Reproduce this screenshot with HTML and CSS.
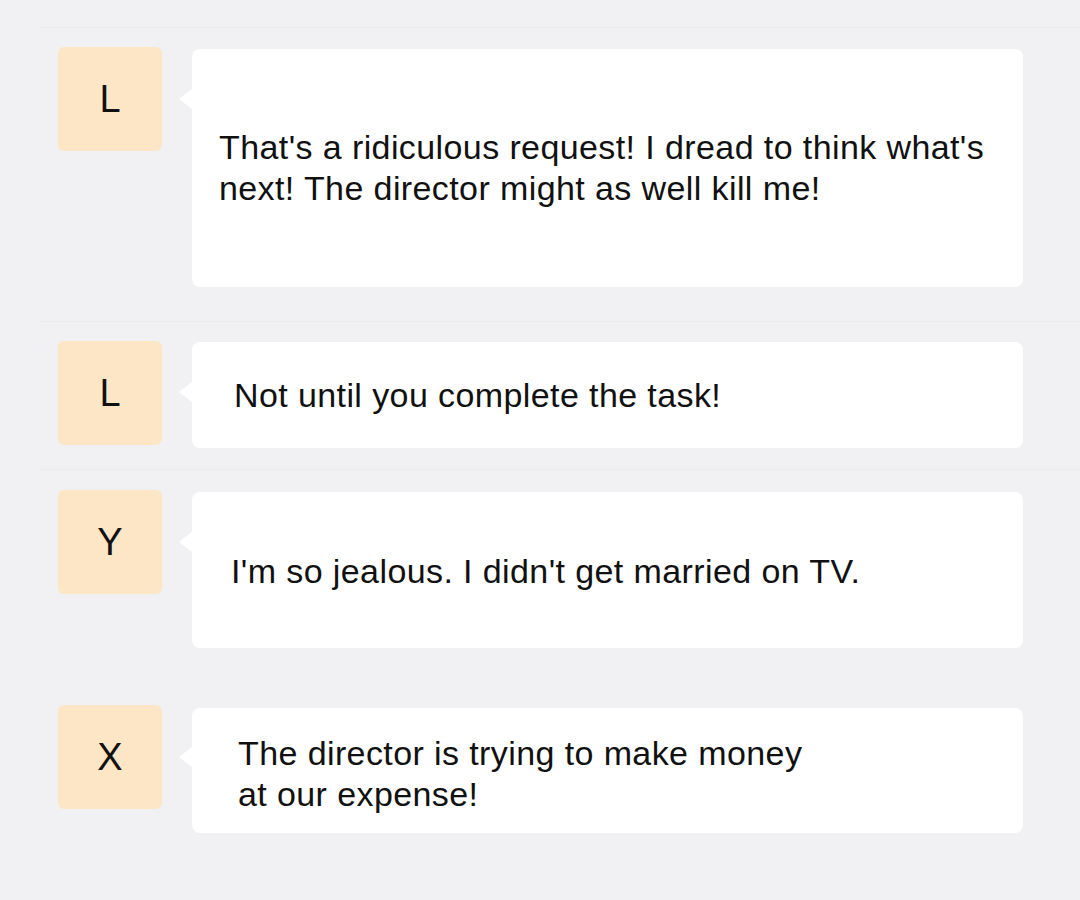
FILE: index.html
```html
<!DOCTYPE html>
<html lang="en">
<head>
  <meta charset="UTF-8" />
  <title>Chat</title>
  <link rel="stylesheet" href="styles.css">
</head>
<body>

  <main class="chat">
    <hr class="divider divider-top">

    <!-- Message rows: avatar on the left, speech bubble on the right -->
    <div class="row row-1">
      <div class="avatar">L</div>
      <div class="bubble bubble-tall">
        <p>That's a ridiculous request! I dread to think what's<br>next! The director might as well kill me!</p>
      </div>
    </div>

    <hr class="divider divider-1">

    <div class="row row-2">
      <div class="avatar">L</div>
      <div class="bubble bubble-short">
        <p>Not until you complete the task!</p>
      </div>
    </div>

    <hr class="divider divider-2">

    <div class="row row-3">
      <div class="avatar">Y</div>
      <div class="bubble bubble-mid">
        <p>I'm so jealous. I didn't get married on TV.</p>
      </div>
    </div>

    <div class="row row-4">
      <div class="avatar">X</div>
      <div class="bubble bubble-two">
        <p>The director is trying to make money<br>at our expense!</p>
      </div>
    </div>
  </main>

</body>
</html>
```

FILE: styles.css
```css
body {
  margin: 0;
  background-color: #f1f1f3;
  font-family: "Liberation Sans", Arial, sans-serif;
  color: #111;
}

.chat {
  padding-top: 27px;
}

/* Faint separators between groups */
.divider {
  border: 0;
  height: 1px;
  margin: 0 0 0 40px;
  background-color: #e9ede8;
}

.divider-1 {
  margin-top: 34px;
}

.divider-2 {
  margin-top: 21px;
}

.row {
  display: flex;
  align-items: flex-start;
  gap: 30px;
  margin-left: 58px;
  margin-right: 57px;
}

.row-1 {
  margin-top: 19px;
}

.row-2 {
  margin-top: 19px;
}

.row-3 {
  margin-top: 20px;
}

.row-4 {
  margin-top: 57px;
}

/* Square initials avatar */
.avatar {
  flex: none;
  width: 104px;
  height: 104px;
  border-radius: 6px;
  background-color: #fde6c6;
  display: flex;
  align-items: center;
  justify-content: center;
  font-size: 38px;
  color: #111;
}

/* Speech bubble */
.bubble {
  position: relative;
  flex: 1;
  background-color: #fff;
  border-radius: 8px;
  display: flex;
  align-items: center;
  box-sizing: border-box;
  padding-left: 42px;
}

.bubble::before {
  content: "";
  position: absolute;
  left: -13px;
  border-top: 10px solid transparent;
  border-bottom: 10px solid transparent;
  border-right: 13px solid #fff;
}

.bubble p {
  margin: 0;
  font-size: 34px;
  letter-spacing: 0.4px;
  line-height: 41px;
}

.bubble-tall {
  margin-top: 2px;
  height: 238px;
  padding-left: 27px;
}

.bubble-tall::before {
  top: 40px;
}

.bubble-short {
  margin-top: 1px;
  height: 106px;
}

.bubble-short::before {
  top: 40px;
}

.bubble-mid {
  margin-top: 2px;
  height: 156px;
  padding-left: 39px;
}

.bubble-mid::before {
  top: 40px;
}

.bubble-mid p {
  margin-top: 3px;
}

.bubble-two {
  margin-top: 3px;
  height: 125px;
  padding-left: 46px;
}

.bubble-two::before {
  top: 39px;
}

.bubble-two p {
  margin-top: 6px;
}
```
